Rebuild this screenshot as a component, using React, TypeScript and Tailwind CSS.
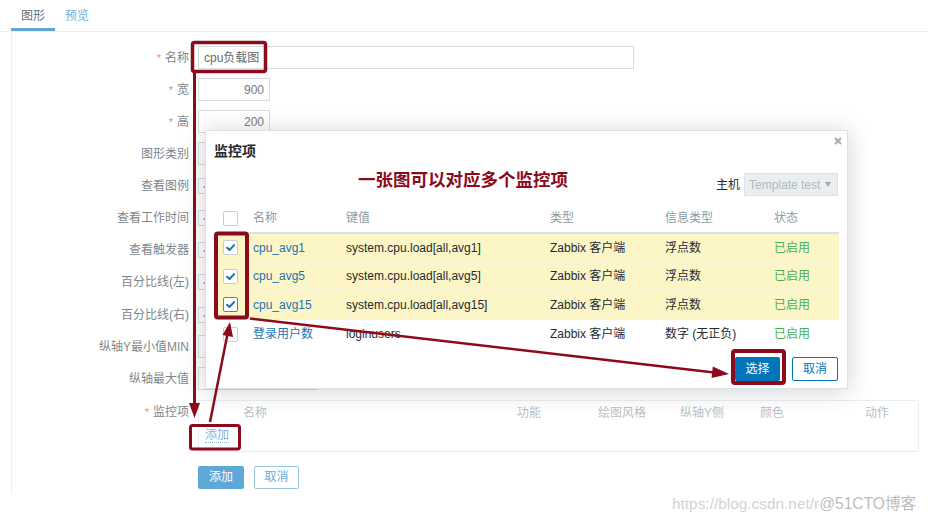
import React from "react";

type Row = { label: string; req?: boolean; kind: "name" | "num" | "select" | "check"; value?: string };

const rows: Row[] = [
  { label: "名称", req: true, kind: "name" },
  { label: "宽", req: true, kind: "num", value: "900" },
  { label: "高", req: true, kind: "num", value: "200" },
  { label: "图形类别", kind: "select" },
  { label: "查看图例", kind: "check" },
  { label: "查看工作时间", kind: "check" },
  { label: "查看触发器", kind: "check" },
  { label: "百分比线(左)", kind: "check" },
  { label: "百分比线(右)", kind: "check" },
  { label: "纵轴Y最小值MIN", kind: "select" },
  { label: "纵轴最大值", kind: "select" },
];

const items = [
  { name: "cpu_avg1", key: "system.cpu.load[all,avg1]", type: "Zabbix 客户端", info: "浮点数", sel: true },
  { name: "cpu_avg5", key: "system.cpu.load[all,avg5]", type: "Zabbix 客户端", info: "浮点数", sel: true },
  { name: "cpu_avg15", key: "system.cpu.load[all,avg15]", type: "Zabbix 客户端", info: "浮点数", sel: true, focus: true },
  { name: "登录用户数", key: "loginusers", type: "Zabbix 客户端", info: "数字 (无正负)", sel: false },
];

function Check({ checked, focus }: { checked?: boolean; focus?: boolean }) {
  return (
    <div
      className={
        focus
          ? "w-[15px] h-[15px] rounded-[2px] border border-[#3d8dc2] bg-white flex items-center justify-center"
          : "w-[15px] h-[15px] rounded-[2px] border border-[#c5ced3] bg-white flex items-center justify-center"
      }
    >
      {checked && (
        <svg width="11" height="11" viewBox="0 0 12 12">
          <path d="M2.3 6.3 L4.9 8.7 L9.9 3.4" fill="none" stroke="#1e76b3" strokeWidth="2.3" strokeLinecap="round" strokeLinejoin="round" />
        </svg>
      )}
    </div>
  );
}

function Label({ text, req }: { text: string; req?: boolean }) {
  return (
    <div className="w-[177px] shrink-0 flex justify-end items-center text-[#80878b] text-[12px] leading-[16px]">
      {req && <span className="text-[#e58a8a] text-[11px] mr-[4px]">*</span>}
      <span>{text}</span>
    </div>
  );
}

function Field({ r }: { r: Row }) {
  if (r.kind === "name")
    return (
      <div className="ml-[9px] w-[436px] h-[23px] border border-[#d7dcdf] bg-white flex items-center px-[5px] text-[12px] text-[#666b6e]">
        cpu负载图
      </div>
    );
  if (r.kind === "num")
    return (
      <div className="ml-[9px] w-[72px] h-[23px] border border-[#d7dcdf] bg-white flex items-center justify-end px-[5px] text-[12px] text-[#74797c]">
        {r.value}
      </div>
    );
  if (r.kind === "select")
    return <div className="ml-[9px] w-[120px] h-[23px] border border-[#d7dcdf] bg-white" />;
  return (
    <div className="ml-[9px] w-[16px] h-[16px] border border-[#d7dcdf] bg-white flex items-center justify-center">
      <svg width="8" height="8" viewBox="0 0 12 12">
        <path d="M2.3 6.3 L4.9 8.7 L9.9 3.4" fill="none" stroke="#7fb0d3" strokeWidth="2.3" />
      </svg>
    </div>
  );
}

export default function App() {
  const red = "#8b0b1d";
  return (
    <div className="relative w-[928px] h-[522px] overflow-hidden bg-white font-['Liberation_Sans','Noto_Sans_CJK_SC',sans-serif] text-[12px]">
      {/* tabs */}
      <div className="flex h-[32px] border-b border-[#eceff1] pl-[11px]">
        <div className="h-[31px] px-[10px] pt-[4px] flex items-center border-b-[3px] border-[#5fa4d2] text-[#6b7175] text-[12px]">
          图形
        </div>
        <div className="h-[31px] px-[10px] pt-[4px] flex items-center border-b-[3px] border-transparent text-[#6fb0dc] text-[12px]">
          预览
        </div>
      </div>

      {/* form panel */}
      <div className="ml-[11px] border-l border-[#eceff1] pt-[14px] pb-[5px] flex flex-col gap-[9.15px]">
        {rows.map((r) => (
          <div key={r.label} className="flex items-center h-[23px]">
            <Label text={r.label} req={r.req} />
            <Field r={r} />
          </div>
        ))}

        {/* items */}
        <div className="flex items-start">
          <div className="h-[24px] flex items-center">
            <Label text="监控项" req />
          </div>
          <div className="ml-[9px] w-[721px] h-[52px] border border-[#eceff1] flex flex-col">
            <div className="h-[24px] flex items-center pl-[44px] text-[#b9c1c5] text-[12px]">
              <div className="w-[274px]">名称</div>
              <div className="w-[81px]">功能</div>
              <div className="w-[82px]">绘图风格</div>
              <div className="w-[80px]">纵轴Y侧</div>
              <div className="w-[105px]">颜色</div>
              <div>动作</div>
            </div>
            <div className="h-[22px] flex items-center pl-[6px]">
              <span className="text-[#82b4d8] leading-[14px] border-b border-dotted border-[#82b4d8]">添加</span>
            </div>
          </div>
        </div>

        {/* buttons */}
        <div className="flex items-center mt-[5px]">
          <div className="w-[177px] shrink-0" />
          <div className="ml-[9px] w-[46px] h-[23px] bg-[#5ea8d8] rounded-[2px] text-white flex items-center justify-center">添加</div>
          <div className="ml-[10px] w-[45px] h-[23px] border border-[#98c6e4] rounded-[2px] text-[#6aa9d3] bg-white flex items-center justify-center">
            取消
          </div>
        </div>
      </div>

      {/* modal */}
      <div className="absolute left-[205px] top-[130px] w-[643px] h-[259px] bg-white border border-[#dbe1e4] shadow-[0_2px_22px_rgba(40,50,60,0.22)] z-10">
        <div className="relative">
          <div className="h-[41px] pl-[8px] flex items-center text-[14px] font-bold text-[#1f2c33]">监控项</div>
          <svg className="absolute right-[5px] top-[6px]" width="8" height="8" viewBox="0 0 8 8">
            <path d="M1 1 L7 7 M7 1 L1 7" stroke="#a3acb0" strokeWidth="2" />
          </svg>
        </div>
        <div className="relative h-[25px] flex items-center justify-end pr-[9px]">
          <div className="absolute left-[152px] top-[-3px] text-[17.5px] leading-[22px] font-bold text-[#8b0b1d]">一张图可以对应多个监控项</div>
          <span className="text-[#1f2c33] mr-[4px]">主机</span>
          <div className="w-[94px] h-[23px] bg-[#ebeef0] border border-[#dde3e6] flex items-center justify-between pl-[4px] pr-[6px] text-[#adbcc3]">
            <span>Template test</span>
            <svg width="6" height="5" viewBox="0 0 6 5">
              <path d="M0 0 L6 0 L3 5 Z" fill="#9eabb1" />
            </svg>
          </div>
        </div>
        <div className="mt-[7px] mx-[8px]">
          <div className="h-[30px] border-b-2 border-[#d9dfe3] flex items-center text-[#8e9ba2]">
            <div className="w-[39px] pl-[9px]">
              <Check />
            </div>
            <div className="w-[93px]">名称</div>
            <div className="w-[204px]">键值</div>
            <div className="w-[115px]">类型</div>
            <div className="w-[109px]">信息类型</div>
            <div>状态</div>
          </div>
          {items.map((it) => (
            <div
              key={it.name}
              className={
                it.sel
                  ? "h-[28.6px] border-b border-[#f4efd6] bg-[#fcf6c6] flex items-center text-[#1f2c33]"
                  : "h-[28.6px] bg-white flex items-center text-[#1f2c33]"
              }
            >
              <div className="w-[39px] pl-[9px]">
                <Check checked={it.sel} focus={it.focus} />
              </div>
              <div className="w-[93px] text-[#1c74b0]">{it.name}</div>
              <div className="w-[204px]">{it.key}</div>
              <div className="w-[115px]">{it.type}</div>
              <div className="w-[109px]">{it.info}</div>
              <div className="text-[#4eae55]">已启用</div>
            </div>
          ))}
        </div>
        <div className="mt-[9px] pr-[9px] flex justify-end gap-[12px]">
          <div className="w-[45px] h-[24px] bg-[#0275b8] rounded-[2px] text-white flex items-center justify-center">选择</div>
          <div className="w-[46px] h-[24px] border border-[#0275b8] rounded-[2px] text-[#0275b8] bg-white flex items-center justify-center">取消</div>
        </div>
      </div>

      {/* annotations */}
      <svg className="absolute left-0 top-0 z-20 pointer-events-none" width="928" height="522" viewBox="0 0 928 522">
        <rect x="192.5" y="42.5" width="73" height="29" rx="2" fill="none" stroke={red} strokeWidth="3.5" />
        <line x1="194.5" y1="72" x2="194.5" y2="405" stroke={red} strokeWidth="3" />
        <polygon points="189,403 200,403 194.5,418" fill={red} />
        <rect x="216" y="233.5" width="31" height="84" rx="2" fill="none" stroke={red} strokeWidth="4" />
        <rect x="733" y="351" width="51" height="32" rx="2" fill="none" stroke={red} strokeWidth="4" />
        <rect x="190.5" y="425.5" width="49" height="23.5" rx="2" fill="none" stroke={red} strokeWidth="3" />
        <line x1="210" y1="422" x2="227.5" y2="334" stroke={red} strokeWidth="2.5" />
        <polygon points="230,322 233,337 222.5,335" fill={red} />
        <line x1="250" y1="318.5" x2="714" y2="372.4" stroke={red} strokeWidth="2.5" />
        <polygon points="729,374 711.5,378 712.8,366.5" fill={red} />
      </svg>

      {/* watermark */}
      <div className="absolute left-[672px] top-[492px] z-30 flex items-baseline whitespace-nowrap">
        <span className="text-[15.4px] text-[#d2d2d2]">https://blog.csdn.net/r</span>
        <span className="text-[15.6px] text-[#bdbdbd]">@51CTO博客</span>
      </div>
    </div>
  );
}
